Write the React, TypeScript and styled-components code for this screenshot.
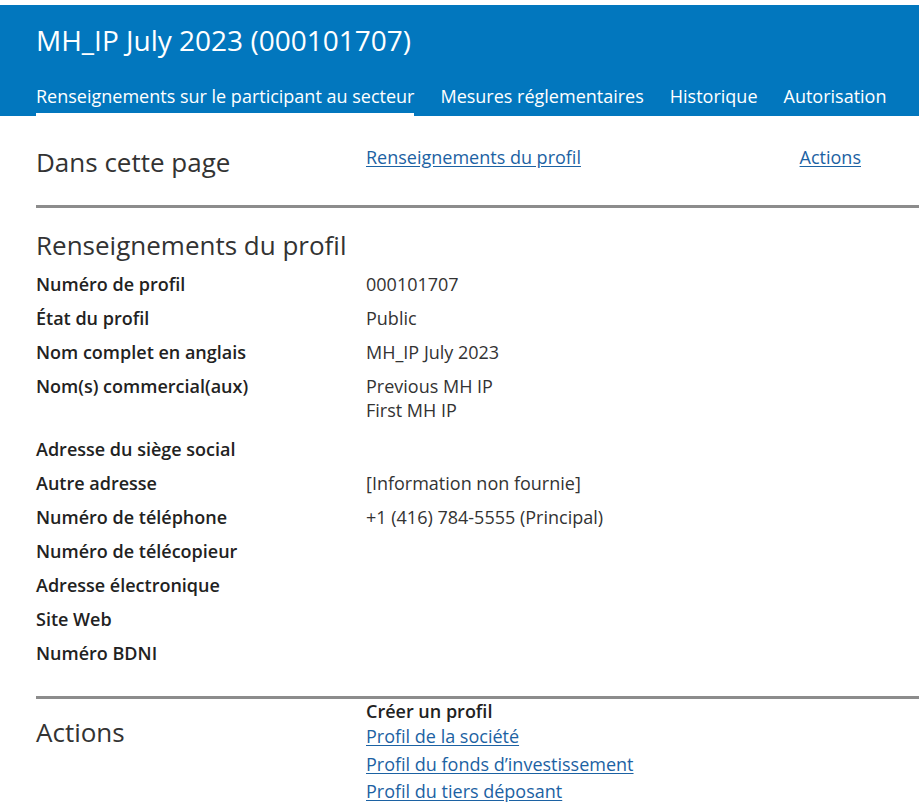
import React from "react";
import styled, { createGlobalStyle } from "styled-components";

const Global = createGlobalStyle`
  html, body { margin: 0; padding: 0; background: #fff; }
  body { font-family: "Open Sans", "Noto Sans", sans-serif; color: #333; overflow: hidden; }
`;

const Header = styled.header`
  margin-top: 5px;
  background: #0277be;
  color: #fff;
  padding: 0 0 0 36px;
`;

const Title = styled.h1`
  margin: 0;
  padding-top: 18px;
  font-size: 28px;
  font-weight: 400;
  line-height: 34px;
`;

const Tabs = styled.nav`
  display: flex;
  gap: 26px;
  margin-top: 27px;
`;

const Tab = styled.a<{ $active?: boolean }>`
  font-size: 18px;
  line-height: 25px;
  color: #fff;
  text-decoration: none;
  padding-bottom: 4px;
  border-bottom: 3px solid ${(p) => (p.$active ? "#fff" : "transparent")};
`;

const Main = styled.main`
  padding: 0 0 0 36px;
`;

const Section = styled.section<{ $top: number }>`
  display: grid;
  grid-template-columns: 330px 1fr;
  padding-top: ${(p) => p.$top}px;
`;

const H2 = styled.h2`
  margin: 0;
  font-size: 26px;
  font-weight: 400;
  line-height: 34px;
  color: #333;
`;

const LinkRow = styled.div`
  display: flex;
  justify-content: space-between;
  padding-right: 58px;
`;

const Link = styled.a`
  font-size: 18px;
  line-height: 24px;
  color: #1c62a3;
  text-decoration: underline;
  text-underline-offset: 2px;
`;

const ActionLink = styled(Link)`
  line-height: 27.5px;
`;

const Rule = styled.hr<{ $top: number }>`
  margin: ${(p) => p.$top}px 0 0 0;
  border: 0;
  height: 3px;
  background: #8c8c8c;
`;

const ProfileHeading = styled(H2)`
  margin-top: 20px;
`;

const DataList = styled.dl`
  display: grid;
  grid-template-columns: 330px 1fr;
  row-gap: 10px;
  margin: 10px 0 0 0;
`;

const Term = styled.dt`
  font-size: 18px;
  font-weight: 600;
  line-height: 24px;
  color: #222;
`;

const Desc = styled.dd<{ $extra?: number }>`
  margin: 0 0 ${(p) => p.$extra || 0}px 0;
  font-size: 18px;
  line-height: 24px;
  color: #333;
`;

const ActionsCol = styled.div`
  display: flex;
  flex-direction: column;
  align-items: flex-start;
`;

const ActionsTitle = styled(H2)`
  padding-top: 16px;
`;

const Strong = styled.div`
  font-size: 18px;
  font-weight: 600;
  line-height: 24px;
  color: #222;
`;

const rows: [string, string[], number?][] = [
  ["Numéro de profil", ["000101707"]],
  ["État du profil", ["Public"]],
  ["Nom complet en anglais", ["MH_IP July 2023"]],
  ["Nom(s) commercial(aux)", ["Previous MH IP", "First MH IP"], 5],
  ["Adresse du siège social", []],
  ["Autre adresse", ["[Information non fournie]"]],
  ["Numéro de téléphone", ["+1 (416) 784-5555 (Principal)"]],
  ["Numéro de télécopieur", []],
  ["Adresse électronique", []],
  ["Site Web", []],
  ["Numéro BDNI", []],
];

export default function App() {
  return (
    <>
      <Global />
      <Header>
        <Title>MH_IP July 2023 (000101707)</Title>
        <Tabs>
          <Tab $active>Renseignements sur le participant au secteur</Tab>
          <Tab>Mesures réglementaires</Tab>
          <Tab>Historique</Tab>
          <Tab>Autorisation</Tab>
        </Tabs>
      </Header>
      <Main>
        <Section $top={29}>
          <H2>Dans cette page</H2>
          <LinkRow>
            <Link href="#profil">Renseignements du profil</Link>
            <Link href="#actions">Actions</Link>
          </LinkRow>
        </Section>
        <Rule $top={26} />
        <ProfileHeading>Renseignements du profil</ProfileHeading>
        <DataList>
          {rows.map(([label, values, extra]) => (
            <React.Fragment key={label}>
              <Term>{label}</Term>
              <Desc $extra={extra}>
                {values.map((v) => (
                  <div key={v}>{v}</div>
                ))}
              </Desc>
            </React.Fragment>
          ))}
        </DataList>
        <Rule $top={31} />
        <Section $top={0}>
          <ActionsTitle>Actions</ActionsTitle>
          <ActionsCol>
            <Strong>Créer un profil</Strong>
            <ActionLink href="#">Profil de la société</ActionLink>
            <ActionLink href="#">Profil du fonds d’investissement</ActionLink>
            <ActionLink href="#">Profil du tiers déposant</ActionLink>
          </ActionsCol>
        </Section>
      </Main>
    </>
  );
}
